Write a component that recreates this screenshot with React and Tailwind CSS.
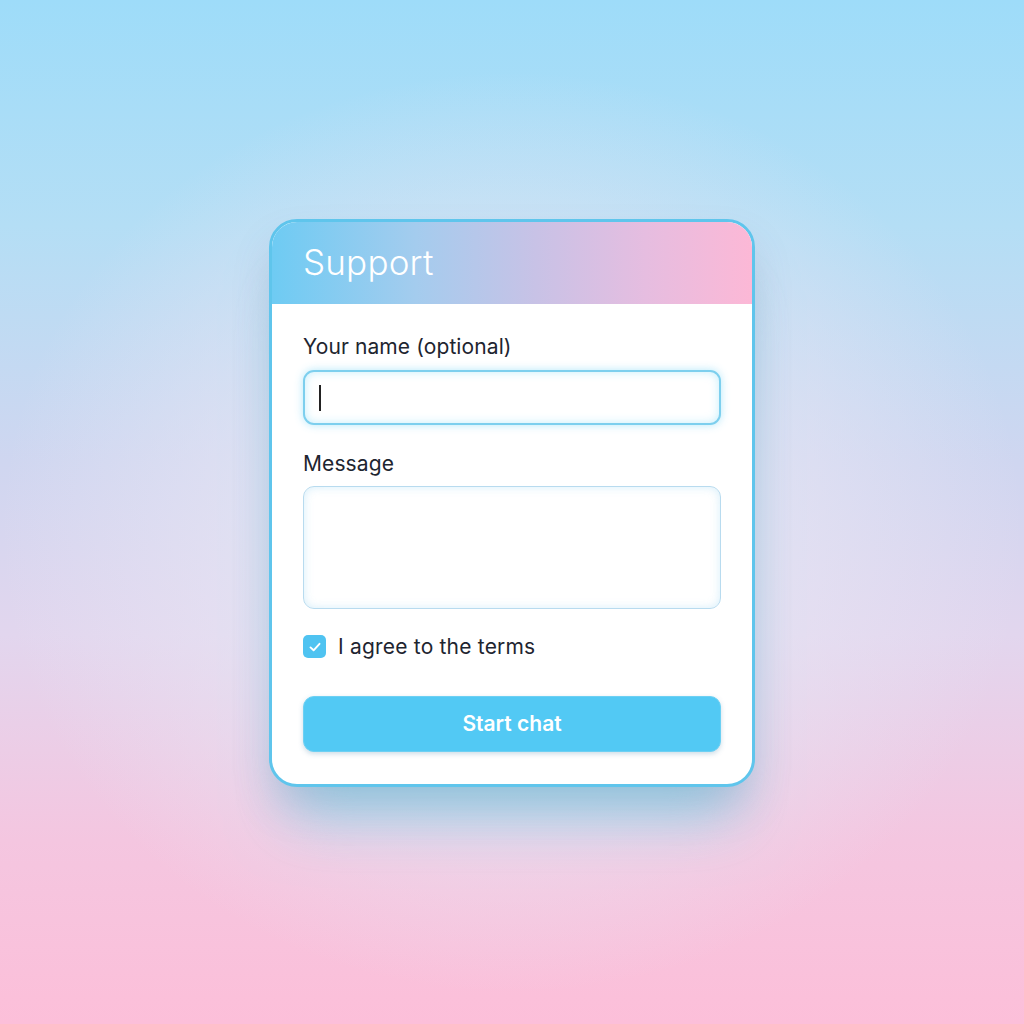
import React from 'react';

const Checkmark = () => (
    <svg width="16" height="16" viewBox="0 0 16 16" fill="none">
        <path d="M3.5 8.4 L6.6 11.3 L12.5 4.8" stroke="white" strokeWidth="1.9" strokeLinecap="round" strokeLinejoin="round" />
    </svg>
);

export default function App() {
    return (
        <div
            className="w-full h-screen flex items-center justify-center bg-[radial-gradient(ellipse_50%_45%_at_50%_52%,rgba(236,234,246,1)_0%,rgba(232,230,244,0.7)_45%,rgba(232,230,244,0)_100%),linear-gradient(to_bottom,#9edcf9_0%,#b4def5_22%,#cfd6f0_45%,#e2d6ee_62%,#f4c6e0_82%,#fcbfd9_100%)]"
            style={{ fontFamily: 'Inter, "Noto Sans", sans-serif' }}
        >
            {/* Card */}
            <div className="w-[486px] mt-[-18px] rounded-[28px] border-[3px] border-[#5fc5ec] bg-white overflow-hidden shadow-[0_22px_40px_-6px_rgba(90,110,150,0.25),0_50px_60px_-20px_rgba(110,220,240,0.6)]">
                {/* Header */}
                <div className="h-[82px] px-[31px] flex items-center bg-[linear-gradient(to_right,#6ecbf3_0%,#a4ccee_30%,#c8c2e6_55%,#e6bde0_78%,#fcb8d6_100%)]">
                    <h1 className="text-[35px] font-light text-white tracking-[0.2px] leading-none mt-[-2px]">Support</h1>
                </div>

                {/* Body */}
                <div className="px-[31px] pt-[32px] pb-[32px] flex flex-col">
                    <label className="text-[21px] text-[#1e2530] leading-none tracking-[0.1px] mb-[13px]">Your name (optional)</label>
                    <div className="h-[55px] rounded-[11px] border-2 border-[#7dcfee] bg-white flex items-center px-[14px] shadow-[0_0_8px_rgba(90,205,245,0.45),inset_0_0_10px_rgba(90,205,245,0.35)]">
                        <div className="w-[1.5px] h-[26px] bg-[#222]" />
                    </div>

                    <label className="text-[21px] text-[#1e2530] leading-none tracking-[0.1px] mt-[28px] mb-[12px]">Message</label>
                    <div className="h-[123px] rounded-[11px] border-[1.5px] border-[#b8dbef] bg-white shadow-[inset_0_0_10px_rgba(120,200,240,0.3)]" />

                    <div className="flex items-center gap-[12px] mt-[26px] h-[23px]">
                        <div className="w-[23px] h-[23px] rounded-[5px] bg-[#4fc3f1] flex items-center justify-center">
                            <Checkmark />
                        </div>
                        <span className="text-[21px] text-[#1e2530] leading-none tracking-[0.2px]">I agree to the terms</span>
                    </div>

                    <button className="mt-[38px] h-[56px] rounded-[11px] bg-[#52c9f4] border border-[#6dd0f3] text-white text-[21px] font-semibold shadow-[0_2px_5px_rgba(60,120,160,0.25)]">
                        Start chat
                    </button>
                </div>
            </div>
        </div>
    );
}
